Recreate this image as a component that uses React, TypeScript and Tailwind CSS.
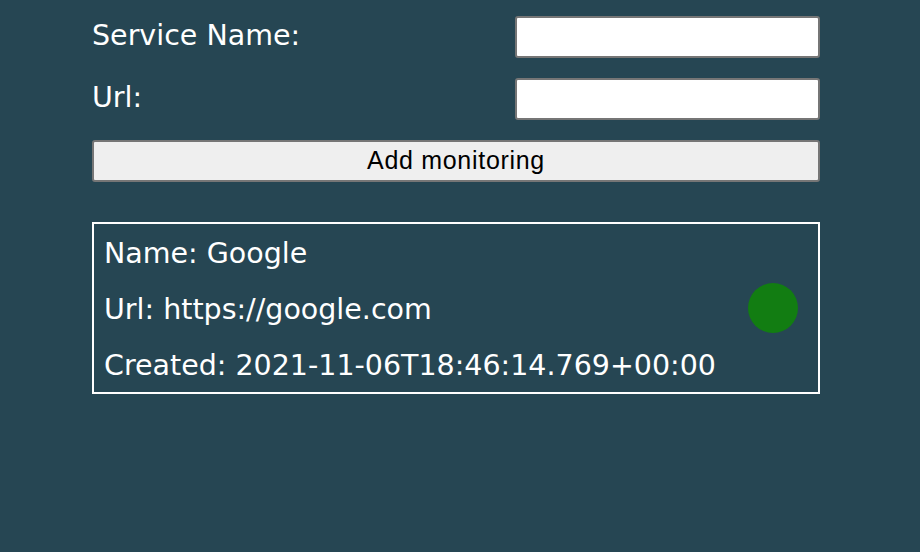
export default function App() {
  return (
    <div className="min-h-[552px] w-full bg-[#264653] text-white" style={{ fontFamily: '"DejaVu Sans", sans-serif' }}>
      <div className="ml-[92px] w-[728px] pt-4">
        <div className="flex items-center justify-between">
          <label className="-mt-[2px] text-[28.5px] leading-none">Service Name:</label>
          <input className="h-[42px] w-[305px] rounded-[3px] border-2 border-[#767676] bg-white" />
        </div>
        <div className="mt-[20px] flex items-center justify-between">
          <label className="-mt-[2px] text-[28.5px] leading-none">Url:</label>
          <input className="h-[42px] w-[305px] rounded-[3px] border-2 border-[#767676] bg-white" />
        </div>
        <button
          className="mt-[20px] h-[42px] w-full rounded-[3px] border-2 border-[#767676] bg-[#efefef] text-[25px] tracking-[0.7px] text-black"
          style={{ fontFamily: '"Liberation Sans", Arial, sans-serif' }}
        >
          Add monitoring
        </button>
        <div className="mt-[40px] flex h-[172px] items-center justify-between border-2 border-white pl-[10px] pr-[20px]">
          <div className="mt-[4px] flex flex-col gap-[20px] text-[28.5px] leading-[36px]">
            <p>Name: Google</p>
            <p>Url: https://google.com</p>
            <p>Created: 2021-11-06T18:46:14.769+00:00</p>
          </div>
          <div className="h-[50px] w-[50px] rounded-full bg-[#127d12]" />
        </div>
      </div>
    </div>
  );
}
